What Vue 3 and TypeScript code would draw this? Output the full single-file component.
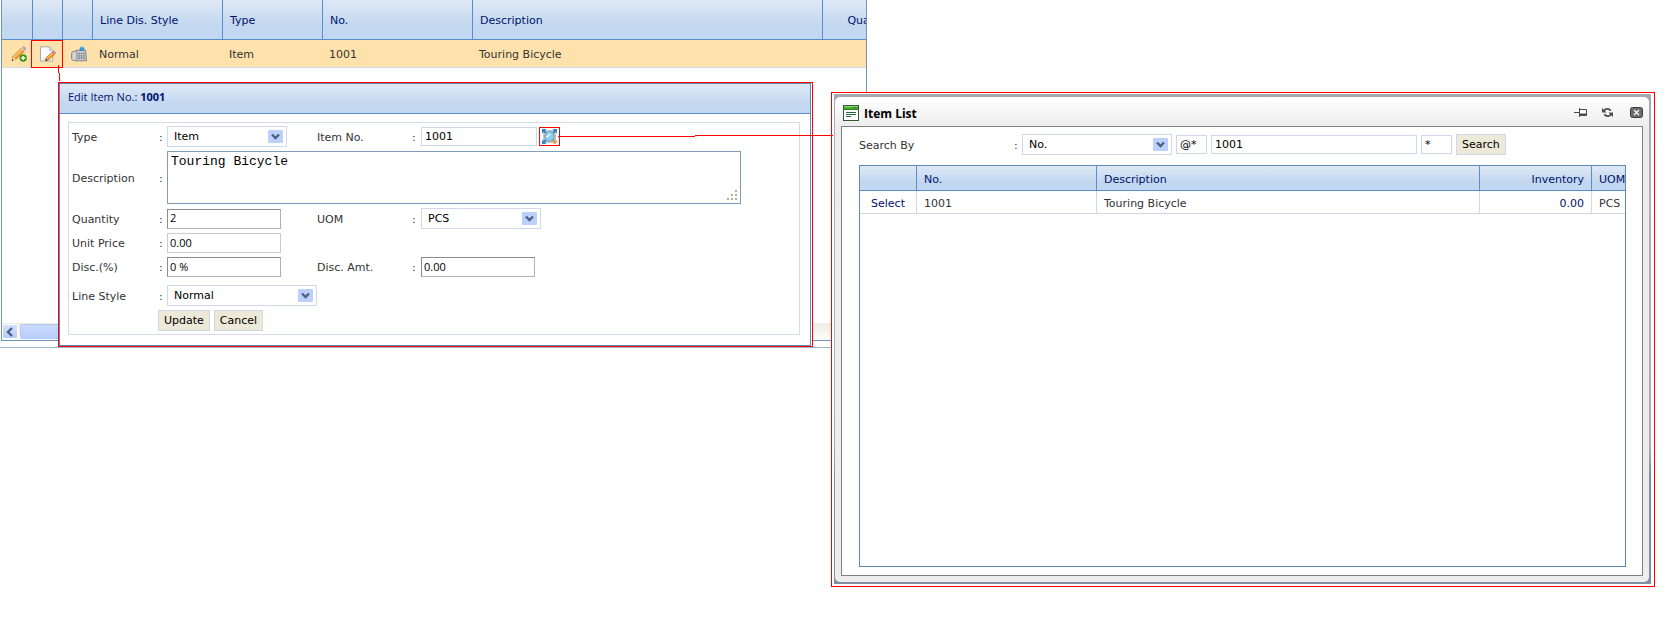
<script setup lang="ts">
import { reactive } from 'vue'

interface Line {
  style: string
  type: string
  no: string
  description: string
}

const lines: Line[] = [
  { style: 'Normal', type: 'Item', no: '1001', description: 'Touring Bicycle' },
]

const form = reactive({
  type: 'Item',
  itemNo: '1001',
  description: 'Touring Bicycle',
  quantity: '2',
  uom: 'PCS',
  unitPrice: '0.00',
  discount: '0 %',
  discountAmount: '0.00',
  lineStyle: 'Normal',
})

const search = reactive({ field: 'No.', prefix: '@*', term: '1001', suffix: '*' })

const results = [
  { no: '1001', description: 'Touring Bicycle', inventory: '0.00', uom: 'PCS' },
]
</script>

<template>
  <main class="stage">
    <section class="lines">
      <div class="lines-box">
        <div class="lines-view">
          <table class="grid lines-table">
            <colgroup>
              <col class="c-first" /><col class="c-icon" /><col class="c-icon" /><col class="c-style" />
              <col class="c-type" /><col class="c-no" /><col /><col class="c-qty" />
            </colgroup>
            <thead>
              <tr>
                <th></th><th></th><th></th>
                <th>Line Dis. Style</th><th>Type</th><th>No.</th><th>Description</th>
                <th class="num">Quantity</th>
              </tr>
            </thead>
            <tbody>
              <tr v-for="line in lines" :key="line.no">
                <td class="tool">
                  <button type="button" class="icon-btn" aria-label="Add line">
                    <svg width="16" height="16" viewBox="0 0 16 16">
                      <path d="M1 14.5 2 10.5 10.5 2 13.5 5 5 13.2Z" fill="#f59a2c" stroke="#b5651a" stroke-width=".7" />
                      <path d="M3 11 11.2 3" stroke="#ffd27a" stroke-width="1.3" />
                      <path d="M1 14.7 2 11 4.8 13.5Z" fill="#f6dfb5" />
                      <path d="M.7 15 1.3 13 2.6 14.3Z" fill="#333" />
                      <path d="M10 2.4 11.4 1 14.6 4 13.2 5.4Z" fill="#c9c9cc" />
                      <path d="M11.4 1C12.8-.4 16 2.4 14.8 3.9L14.4 4.3 11.2 1.2Z" fill="#cf86c4" />
                      <circle cx="12.2" cy="12" r="3.7" fill="#3c9a12" />
                      <path d="M12.2 9.9v4.2M10.1 12h4.2" stroke="#fff" stroke-width="1.5" />
                    </svg>
                  </button>
                </td>
                <td class="tool">
                  <button type="button" class="icon-btn marked" aria-label="Edit line">
                    <svg width="16" height="16" viewBox="0 0 16 16">
                      <path d="M.5.8h9l3.2 3.4v11H.5Z" fill="#fbfbfb" stroke="#a9a9a9" />
                      <path d="M9.5.8v3.4h3.2" fill="#e4e4e4" stroke="#a9a9a9" stroke-width=".8" />
                      <path d="M2 13.5h9" stroke="#e2e2e2" stroke-width="2" />
                      <path d="M5.5 14.8 6.4 11.5 12.2 6 14.5 8.3 8.7 13.8Z" fill="#f59a2c" stroke="#b5651a" stroke-width=".7" />
                      <path d="M7.2 12 12.6 7" stroke="#ffd27a" />
                      <path d="M5.3 15 6 12.7 7.7 14.3Z" fill="#4a3a2a" />
                      <path d="M12 6.2 13.2 5c1-.8 3.4 1.4 2.5 2.4L14.5 8.6Z" fill="#cf7fb8" />
                    </svg>
                  </button>
                </td>
                <td class="tool">
                  <button type="button" class="icon-btn" aria-label="Line details">
                    <svg width="16" height="16" viewBox="0 0 16 16">
                      <path d="M5 4.2h9.6l.9 10.6H4.5Z" fill="#c6cacc" stroke="#808488" />
                      <rect x=".6" y="5.2" width="5.4" height="9.4" rx="2.4" fill="#dedede" stroke="#858585" />
                      <ellipse cx="3" cy="9.8" rx="1.2" ry="2.4" fill="#fff" stroke="#999" stroke-width=".7" />
                      <path d="M9.3 5V1.8h3.4V5" fill="#3d9be0" stroke="#2477b8" />
                      <path d="M8.6 2.4 11 0l2.6 2.4Z" fill="#55b2ee" />
                      <path d="M7.4 7.5h6.8M7.4 9.8h6.8M7.4 12.1h7.2" stroke="#5c6166" stroke-width="1.2" stroke-dasharray="1.4 1" />
                    </svg>
                  </button>
                </td>
                <td>{{ line.style }}</td>
                <td>{{ line.type }}</td>
                <td>{{ line.no }}</td>
                <td>{{ line.description }}</td>
                <td></td>
              </tr>
            </tbody>
          </table>
        </div>
        <div class="scrollbar">
          <button type="button" class="scroll-left" aria-label="Scroll left">
            <svg width="8" height="10" viewBox="0 0 8 10"><path d="M6 1 2 5l4 4" fill="none" stroke="#4d6185" stroke-width="2.4" /></svg>
          </button>
          <div class="thumb"></div>
        </div>
      </div>
    </section>

    <section class="edit">
      <div class="edit-frame">
        <h2 class="edit-title">Edit Item No.: <b>1001</b></h2>
        <form class="edit-form" @submit.prevent>
          <div class="row">
            <label for="type">Type</label><span>:</span>
            <div class="select short">
              <select id="type" v-model="form.type"><option>Item</option></select>
              <svg class="arrow" viewBox="0 0 15 13"><rect width="15" height="13" rx="1" /><path d="M4 4.5 7.5 8 11 4.5" /></svg>
            </div>
            <label for="item-no">Item No.</label><span>:</span>
            <div class="lookup">
              <input id="item-no" v-model="form.itemNo" class="text" type="text" />
              <button type="button" class="lookup-btn" aria-label="Look up item">
                <svg width="15" height="15" viewBox="0 0 15 15">
                  <rect x="2" y="2" width="11" height="11" fill="#e8f5fc" stroke="#7f8c96" />
                  <circle cx="7.5" cy="7.5" r="4.6" fill="#7fd0f3" stroke="#8f9aa3" />
                  <path d="M4.5 8.5 8.5 4.5" stroke="#d4f2ff" stroke-width="2" />
                  <path d="M0 0h4.5L0 4.5ZM15 0v4.5L10.5 0ZM0 15v-4.5L4.5 15Z" fill="#2f86c6" />
                  <path d="M1 1l3 3M14 1l-3 3M1 14l3-3" stroke="#2f86c6" stroke-width="2" />
                  <path d="m10.500 10.500 2 2" stroke="#777" stroke-width="1.6" />
                  <circle cx="12.8" cy="12.8" r="2.1" fill="#e0a04a" />
                </svg>
              </button>
            </div>
          </div>
          <div class="row">
            <label for="description">Description</label><span>:</span>
            <div class="area">
              <textarea id="description" v-model="form.description"></textarea>
              <svg class="grip" viewBox="0 0 10 10">
                <path d="M8 0h2v2H8zM4 4h2v2H4zM8 4h2v2H8zM0 8h2v2H0zM4 8h2v2H4zM8 8h2v2H8z" fill="#b3b19c" />
              </svg>
            </div>
          </div>
          <div class="row">
            <label for="quantity">Quantity</label><span>:</span>
            <input id="quantity" v-model="form.quantity" class="amount" type="text" />
            <label for="uom">UOM</label><span>:</span>
            <div class="select short">
              <select id="uom" v-model="form.uom"><option>PCS</option></select>
              <svg class="arrow" viewBox="0 0 15 13"><rect width="15" height="13" rx="1" /><path d="M4 4.5 7.5 8 11 4.5" /></svg>
            </div>
          </div>
          <div class="row">
            <label for="unit-price">Unit Price</label><span>:</span>
            <input id="unit-price" v-model="form.unitPrice" class="amount locked" type="text" readonly />
          </div>
          <div class="row">
            <label for="discount">Disc.(%)</label><span>:</span>
            <input id="discount" v-model="form.discount" class="amount" type="text" />
            <label for="discount-amount">Disc. Amt.</label><span>:</span>
            <input id="discount-amount" v-model="form.discountAmount" class="amount" type="text" />
          </div>
          <div class="row spaced">
            <label for="line-style">Line Style</label><span>:</span>
            <div class="select">
              <select id="line-style" v-model="form.lineStyle"><option>Normal</option></select>
              <svg class="arrow" viewBox="0 0 15 13"><rect width="15" height="13" rx="1" /><path d="M4 4.5 7.5 8 11 4.5" /></svg>
            </div>
          </div>
          <div class="actions">
            <button type="submit" class="btn">Update</button>
            <button type="button" class="btn">Cancel</button>
          </div>
        </form>
      </div>
    </section>

    <section class="picker">
      <div class="picker-shade">
        <div class="picker-window">
          <header class="picker-bar">
            <svg width="16" height="16" viewBox="0 0 16 16">
              <rect x=".5" y=".5" width="15" height="15" fill="#fff" stroke="#2e5b32" />
              <rect x="1" y="1" width="14" height="3.4" fill="#43b02f" />
              <path d="M1 1.5h14" stroke="#8fdc7c" />
              <path d="M10 2.5h1M12 2.5h1M14 2.5h1" stroke="#1f6b1b" />
              <path d="M0 4.5h16" stroke="#2f7a2c" />
              <path d="M3 7.5h10M3 9.5h10M3 11.5h5" stroke="#1d6b3a" />
            </svg>
            <h2>Item List</h2>
            <button type="button" class="bar-btn" aria-label="Pin">
              <svg width="14" height="10" viewBox="0 0 14 10">
                <path d="M0 4.5h5M5.5 0v9" stroke="#4b4b4b" />
                <path d="M6 1.500h6.500v6H6" fill="#fff" stroke="#4b4b4b" />
                <path d="M6 6.500h6.500" stroke="#4b4b4b" stroke-width="2" />
              </svg>
            </button>
            <button type="button" class="bar-btn reload" aria-label="Reload">
              <svg width="11" height="11" viewBox="0 0 12 12">
                <path d="M2 5C3 1.500 7 1 9.500 4M10 7C9 10.500 5 11 2.500 8" fill="none" stroke="#4b4b4b" stroke-width="2" />
                <path d="M0 1v5h5ZM12 11V6H7Z" fill="#4b4b4b" />
              </svg>
            </button>
            <button type="button" class="bar-btn" aria-label="Close">
              <svg width="13" height="11" viewBox="0 0 13 11">
                <rect x=".5" y=".5" width="12" height="10" rx="2" fill="#6c6c6c" stroke="#3d3d3d" />
                <path d="m4 3 5 5m0-5L4 8" stroke="#fff" stroke-width="1.2" />
              </svg>
            </button>
          </header>
          <div class="picker-body">
            <form class="search" @submit.prevent>
              <label for="search-field">Search By</label><span>:</span>
              <div class="select">
                <select id="search-field" v-model="search.field"><option>No.</option></select>
                <svg class="arrow" viewBox="0 0 15 13"><rect width="15" height="13" rx="1" /><path d="M4 4.5 7.5 8 11 4.5" /></svg>
              </div>
              <input v-model="search.prefix" class="text wild" type="text" aria-label="Prefix" />
              <input v-model="search.term" class="text term" type="text" aria-label="Search text" />
              <input v-model="search.suffix" class="text wild" type="text" aria-label="Suffix" />
              <button type="submit" class="btn">Search</button>
            </form>
            <div class="results">
              <table class="grid results-table">
                <colgroup>
                  <col class="r-select" /><col class="r-no" /><col /><col class="r-inv" /><col class="r-uom" />
                </colgroup>
                <thead>
                  <tr><th></th><th>No.</th><th>Description</th><th class="num">Inventory</th><th>UOM</th></tr>
                </thead>
                <tbody>
                  <tr v-for="item in results" :key="item.no">
                    <td class="pick"><a href="#">Select</a></td>
                    <td>{{ item.no }}</td>
                    <td>{{ item.description }}</td>
                    <td class="num">{{ item.inventory }}</td>
                    <td>{{ item.uom }}</td>
                  </tr>
                </tbody>
              </table>
            </div>
          </div>
        </div>
      </div>
    </section>

    <svg class="connectors" aria-hidden="true">
      <path d="M58.5 65v8M59.5 73v8M558 136.500h137M695 135.500h138" fill="none" stroke="#f00" />
    </svg>
  </main>
</template>

<style>
body {
  margin: 0;
  background: #fff;
}
</style>

<style scoped>
.stage {
  position: relative;
  display: grid;
  grid-template-columns: 58fr 755fr 18fr 36fr 788fr 22fr;
  align-items: start;
  min-height: 100vh;
  font-family: "DejaVu Sans", Verdana, sans-serif;
  font-size: 11px;
  line-height: 14px;
  color: #333;
}
.stage *,
.stage *::before {
  box-sizing: border-box;
}
button, input, select, textarea {
  margin: 0;
  font: inherit;
  color: #000;
  border-radius: 0;
  outline: none;
}
h2 {
  margin: 0;
  font-weight: normal;
}

/* tables */
.grid {
  table-layout: fixed;
  border-collapse: separate;
  border-spacing: 0;
}
.grid th,
.grid td {
  padding: 3px 7px 0;
  text-align: left;
  font-weight: normal;
  white-space: nowrap;
}
.grid th {
  color: #00126b;
  background: linear-gradient(#dfe9f5, #c2d7f0 65%, #c2d7f0);
  border-right: 1px solid #5b8ccb;
  border-bottom: 1px solid #5b8ccb;
}
.grid .num {
  text-align: right;
  color: #00126b;
}

/* document lines */
.lines {
  grid-area: 1 / 1 / 2 / 5;
  padding: 0 0 6px 1px;
}
.lines::before {
  content: "";
  position: absolute;
  left: 0;
  top: 347px;
  width: 50%;
  height: 1px;
  background: #9cb4cd;
}
.lines-box {
  border: 1px solid #6f93bb;
  border-top: 0;
  overflow: hidden;
}
.lines-view {
  min-height: 323px;
}
.lines-table {
  width: calc(100% + 37px);
}
.lines-table th {
  height: 40px;
}
.lines-table td {
  height: 28px;
  padding: 3px 6px 0;
  background: #ffe2ab;
  border-bottom: 1px solid #d5dae8;
}
.lines-table .tool {
  padding: 0;
  height: 28px;
}
.c-first { width: 31px; }
.c-icon { width: 30px; }
.c-style { width: 130px; }
.c-type { width: 100px; }
.c-no { width: 150px; }
.c-qty { width: 80px; }
.icon-btn {
  display: flex;
  align-items: center;
  justify-content: center;
  width: 100%;
  height: 27px;
  padding: 0 0 0 2px;
  border: 0;
  background: none;
}
.marked {
  width: 32px;
  height: 28px;
  margin: -1px;
  margin-left: -2px;
  position: relative;
  border: 1px solid #f00;
}
.scrollbar {
  display: flex;
  gap: 2px;
  height: 17px;
  padding: 1px 0;
  background: linear-gradient(#eeede5, #fdfdfa);
}
.scroll-left {
  display: flex;
  align-items: center;
  justify-content: center;
  width: 16px;
  padding: 0;
  border: 1px solid #fff;
  border-radius: 2px;
  background: linear-gradient(#d5e0fc, #b7cbf8);
}
.thumb {
  width: 60%;
  border: 1px solid #b4c8f6;
  border-radius: 2px;
  background: linear-gradient(#cbdafd, #b9cdfb);
}

/* fields */
.select {
  position: relative;
  width: 150px;
}
.short {
  width: 120px;
}
.select select {
  display: block;
  appearance: none;
  width: 100%;
  height: 21px;
  padding: 1px 24px 0 6px;
  border: 1px solid #d0d7ea;
  background: #fff;
}
.arrow {
  position: absolute;
  right: 4px;
  top: 4px;
  width: 15px;
  height: 13px;
  pointer-events: none;
}
.arrow rect { fill: #bdd0fb; }
.arrow path {
  fill: none;
  stroke: #4d6185;
  stroke-width: 2.4;
}
.text {
  height: 19px;
  padding: 0 3px;
  border: 1px solid #d0d7ea;
  background: #fff;
}
.amount {
  width: 114px;
  height: 20px;
  padding: 0 2px 2px;
  border: 1px solid #8c8c8c;
  border-right-color: #b0b0b0;
  border-bottom-color: #b0b0b0;
  background: #fff;
  font-family: "Open Sans", "Noto Sans", sans-serif;
}
.locked {
  border-color: #ccc;
}
.btn {
  height: 21px;
  padding: 1px 5px 0;
  border: 1px solid #d0d7ea;
  background: #ece9d8;
}

/* edit window */
.edit {
  grid-area: 1 / 2 / 2 / 3;
  margin-top: 82px;
  padding-right: 1px;
  border: 1px solid #f00;
  background: #fff;
  z-index: 1;
}
.edit-frame {
  padding-bottom: 10px;
  border: 1px solid #6088b0;
}
.edit-title {
  height: 30px;
  padding: 0 8px;
  border-bottom: 1px solid #5b8ccb;
  background: linear-gradient(#dfe9f5, #c2d7f0 70%, #c2d7f0);
  font-family: "Open Sans", "Noto Sans", sans-serif;
  font-size: 11px;
  line-height: 26px;
  color: #00126b;
}
.edit-form {
  display: flex;
  flex-direction: column;
  gap: 4px;
  margin: 8px 10px 0 8px;
  padding: 3px;
  border: 1px solid #d5dae8;
}
.row {
  display: grid;
  grid-template-columns: 87px 8px 150px 95px 9px 1fr;
  align-items: center;
}
.row label,
.row span,
.search label,
.search span {
  padding-top: 2px;
}
.spaced {
  margin-top: 4px;
}
.lookup {
  display: flex;
  gap: 2px;
}
.lookup .text {
  width: 116px;
}
.lookup-btn {
  display: flex;
  align-items: center;
  justify-content: center;
  width: 21px;
  height: 19px;
  padding: 0;
  border: 1px solid #f00;
  background: none;
}
.area {
  position: relative;
  grid-column: 3 / -1;
  margin-right: 55px;
}
.area textarea {
  display: block;
  width: 100%;
  height: 53px;
  padding: 2px 3px;
  border: 1px solid #7f9db9;
  resize: none;
  font-family: "Liberation Mono", "Courier New", monospace;
  font-size: 13px;
  line-height: 15px;
}
.grip {
  position: absolute;
  right: 4px;
  bottom: 4px;
  width: 10px;
  height: 10px;
}
.actions {
  display: flex;
  gap: 4px;
  padding-left: 86px;
}

/* item list window */
.picker {
  grid-area: 1 / 4 / 2 / 6;
  margin-top: 92px;
  padding: 1px 3px 2px 2px;
  border: 1px solid #f00;
  background: #fff;
  z-index: 2;
}
.picker-shade {
  padding: 3px 2px 2px 1px;
  background: linear-gradient(#a2a9b3, #a9adb3 30px, #b0b0b0 100px, #adadad 350px, #8090a3 380px, #8090a3);
}
.picker-window {
  padding: 0 6px 6px;
  border-radius: 5px;
  background: linear-gradient(#fff, #ededed 30px, #ededed);
}
.picker-bar {
  display: flex;
  align-items: center;
  height: 29px;
  padding: 2px 0 0 2px;
}
.picker-bar h2 {
  flex: 1;
  margin-left: 5px;
  padding-top: 2px;
  font-family: "Open Sans", "Noto Sans", sans-serif;
  font-size: 12px;
  font-weight: bold;
  line-height: 16px;
  color: #000;
}
.bar-btn {
  display: flex;
  padding: 0;
  border: 0;
  background: none;
}
.reload {
  margin: 0 17px 0 14px;
}
.picker-body {
  padding: 7px 16px 8px 17px;
  border: 1px solid #808080;
  background: #fff;
}
.search {
  display: flex;
  align-items: center;
  gap: 4px;
}
.search label {
  flex: 0 0 151px;
}
.search span {
  flex: 0 0 4px;
}
.search .wild {
  width: 31px;
}
.search .term {
  width: 206px;
}
.results {
  margin-top: 10px;
  min-height: 402px;
  border: 1px solid #6088b0;
  overflow: hidden;
}
.results-table {
  width: calc(100% + 21px);
}
.results-table th {
  height: 25px;
}
.results-table td {
  height: 23px;
  border-right: 1px solid #d0d7ea;
  border-bottom: 1px solid #d0d7ea;
}
.results-table .pick {
  text-align: center;
}
.pick a {
  color: #00126b;
  text-decoration: none;
}
.r-select { width: 57px; }
.r-no { width: 180px; }
.r-inv { width: 112px; }
.r-uom { width: 54px; }

.connectors {
  position: absolute;
  inset: 0;
  width: 100%;
  height: 100%;
  z-index: 3;
  pointer-events: none;
}
</style>
